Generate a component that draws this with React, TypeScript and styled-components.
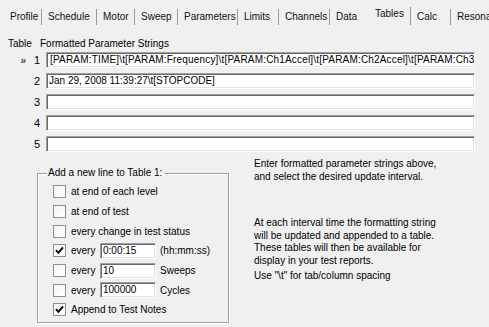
import styled, { createGlobalStyle } from "styled-components";

const GlobalStyle = createGlobalStyle`
  html, body {
    margin: 0;
    padding: 0;
    background: #f0f0f0;
  }
  body {
    font-family: "Liberation Sans", Arial, sans-serif;
    font-size: 10px;
    color: #000;
  }
`;

interface TabDef {
  label: string;
  width: number;
  selected?: boolean;
  separator?: boolean;
}

const tabs: TabDef[] = [
  { label: "Profile", width: 38, separator: true },
  { label: "Schedule", width: 55, separator: true },
  { label: "Motor", width: 38, separator: true },
  { label: "Sweep", width: 43, separator: true },
  { label: "Parameters", width: 60, separator: true },
  { label: "Limits", width: 41, separator: true },
  { label: "Channels", width: 51, separator: true },
  { label: "Data", width: 39 },
  { label: "Tables", width: 42, selected: true, separator: true },
  { label: "Calc", width: 40, separator: true },
  { label: "Resonance", width: 60 },
];

const strings = [
  "[PARAM:TIME]\\t[PARAM:Frequency]\\t[PARAM:Ch1Accel]\\t[PARAM:Ch2Accel]\\t[PARAM:Ch3Accel]\\t[PARAM:Ch4Accel]",
  "Jan 29, 2008 11:39:27\\t[STOPCODE]",
  "",
  "",
  "",
];

interface Option {
  label: string;
  checked?: boolean;
  value?: string;
  unit?: string;
}

const options: Option[] = [
  { label: "at end of each level" },
  { label: "at end of test" },
  { label: "every change in test status" },
  { label: "every", checked: true, value: "0:00:15", unit: "(hh:mm:ss)" },
  { label: "every", value: "10", unit: "Sweeps" },
  { label: "every", value: "100000", unit: "Cycles" },
  { label: "Append to Test Notes", checked: true },
];

const CheckMark = () => (
  <svg width="9" height="9" viewBox="0 0 9 9">
    <path d="M1 4.2 L3.4 6.8 L8 1.4" fill="none" stroke="#000" strokeWidth="1.9" />
  </svg>
);

const App = () => {
  return (
    <Window>
      <GlobalStyle />
      <TabStrip>
        {tabs.map((t) => (
          <Tab key={t.label} $width={t.width} $selected={t.selected} $separator={t.separator}>
            {t.label}
          </Tab>
        ))}
      </TabStrip>

      <Panel>
        <HeaderRow>
          <HeaderCell $width={32}>Table</HeaderCell>
          <HeaderCell>Formatted Parameter Strings</HeaderCell>
        </HeaderRow>

        <StringList>
          {strings.map((s, i) => (
            <StringRow key={i}>
              <Marker>{i === 0 ? "»" : ""}</Marker>
              <RowNumber>{i + 1}</RowNumber>
              <TextBox $wide={i === 0}>
                {i === 0 && <Caret />}
                {s}
              </TextBox>
            </StringRow>
          ))}
        </StringList>

        <Bottom>
          <GroupBox>
            <Legend>Add a new line to Table 1:</Legend>
            {options.map((o, i) => (
              <OptionRow key={i}>
                <CheckBox>{o.checked && <CheckMark />}</CheckBox>
                <OptionLabel $fixed={o.value !== undefined}>{o.label}</OptionLabel>
                {o.value !== undefined && (
                  <>
                    <SmallBox>{o.value}</SmallBox>
                    <Unit>{o.unit}</Unit>
                  </>
                )}
              </OptionRow>
            ))}
          </GroupBox>

          <HelpText>
            <Para>
              Enter formatted parameter strings above,
              <br />
              and select the desired update interval.
            </Para>
            <Para $gap={34}>
              At each interval time the formatting string
              <br />
              will be updated and appended to a table.
              <br />
              These tables will then be available for
              <br />
              display in your test reports.
            </Para>
            <Para $gap={3}>Use "\t" for tab/column spacing</Para>
          </HelpText>
        </Bottom>
      </Panel>
    </Window>
  );
};

const Window = styled.div`
  width: 489px;
  height: 327px;
  overflow: hidden;
  background: #f0f0f0;
`;

const TabStrip = styled.div`
  display: flex;
  align-items: flex-end;
  height: 26px;
  padding-left: 4px;
  white-space: nowrap;
`;

const Tab = styled.div<{ $width: number; $selected?: boolean; $separator?: boolean }>`
  flex: 0 0 ${(p) => p.$width}px;
  height: ${(p) => (p.$selected ? 18 : 16)}px;
  line-height: ${(p) => (p.$selected ? 14 : 16)}px;
  padding-left: 6px;
  box-sizing: border-box;
  border-right: 1px solid ${(p) => (p.$separator ? "#9a9a9a" : "transparent")};
  margin-bottom: 1px;
  overflow: hidden;
  color: #111;
`;

const Panel = styled.div`
  padding: 0 14px 0 8px;
`;

const HeaderRow = styled.div`
  display: flex;
  margin-top: 11px;
  height: 13px;
  line-height: 13px;
`;

const HeaderCell = styled.div<{ $width?: number }>`
  ${(p) => (p.$width ? `flex: 0 0 ${p.$width}px;` : "flex: 1;")}
`;

const StringList = styled.div`
  display: flex;
  flex-direction: column;
  gap: 5px;
  margin-top: 2px;
`;

const StringRow = styled.div`
  display: grid;
  grid-template-columns: 18px 8px 1fr;
  column-gap: 6px;
  align-items: center;
  height: 16px;
`;

const Marker = styled.span`
  text-align: right;
  font-size: 10px;
`;

const RowNumber = styled.span`
  text-align: right;
  font-size: 11px;
`;

const sunken = `
  box-sizing: border-box;
  background: #fff;
  border: 1px solid;
  border-color: #a0a0a0 #ffffff #ffffff #a0a0a0;
  box-shadow: inset 1px 1px 0 #696969, inset -1px -1px 0 #e3e3e3;
  white-space: nowrap;
  overflow: hidden;
`;

const TextBox = styled.div<{ $wide?: boolean }>`
  ${sunken}
  height: 16px;
  line-height: 14px;
  padding-left: 2px;
  display: flex;
  align-items: center;
  letter-spacing: ${(p) => (p.$wide ? "0.18px" : "0")};
`;

const Caret = styled.span`
  display: inline-block;
  width: 1px;
  height: 11px;
  background: #000;
  margin-right: 1px;
`;

const Bottom = styled.div`
  display: flex;
  margin-top: 15px;
`;

const GroupBox = styled.fieldset`
  margin: 0 0 0 29px;
  padding: 3px 0 0 15px;
  width: 192px;
  height: 156px;
  box-sizing: border-box;
  border: 1px solid #a0a0a0;
  box-shadow: 1px 1px 0 #fff, inset 1px 1px 0 #fff;
  display: flex;
  flex-direction: column;
`;

const Legend = styled.legend`
  padding: 0 2px 0 1px;
  margin-left: -6px;
  line-height: 12px;
  font-size: 10px;
`;

const OptionRow = styled.div`
  display: flex;
  align-items: center;
  flex: 0 0 19.7px;
`;

const CheckBox = styled.span`
  flex: 0 0 13px;
  height: 13px;
  box-sizing: border-box;
  border: 1px solid #8e8f8f;
  background: linear-gradient(135deg, #f4f4f4, #ffffff);
  display: flex;
  align-items: center;
  justify-content: center;
  margin-right: 5px;
`;

const OptionLabel = styled.span<{ $fixed?: boolean }>`
  ${(p) => (p.$fixed ? "flex: 0 0 29px;" : "")}
  white-space: nowrap;
`;

const SmallBox = styled.div`
  ${sunken}
  width: 56px;
  height: 16px;
  line-height: 14px;
  padding-left: 2px;
  margin-right: 4px;
`;

const Unit = styled.span`
  white-space: nowrap;
`;

const HelpText = styled.div`
  margin-left: 25px;
  margin-top: -9px;
  line-height: 12.5px;
`;

const Para = styled.p<{ $gap?: number }>`
  margin: ${(p) => p.$gap ?? 0}px 0 0;
  white-space: nowrap;
`;

export default App;
